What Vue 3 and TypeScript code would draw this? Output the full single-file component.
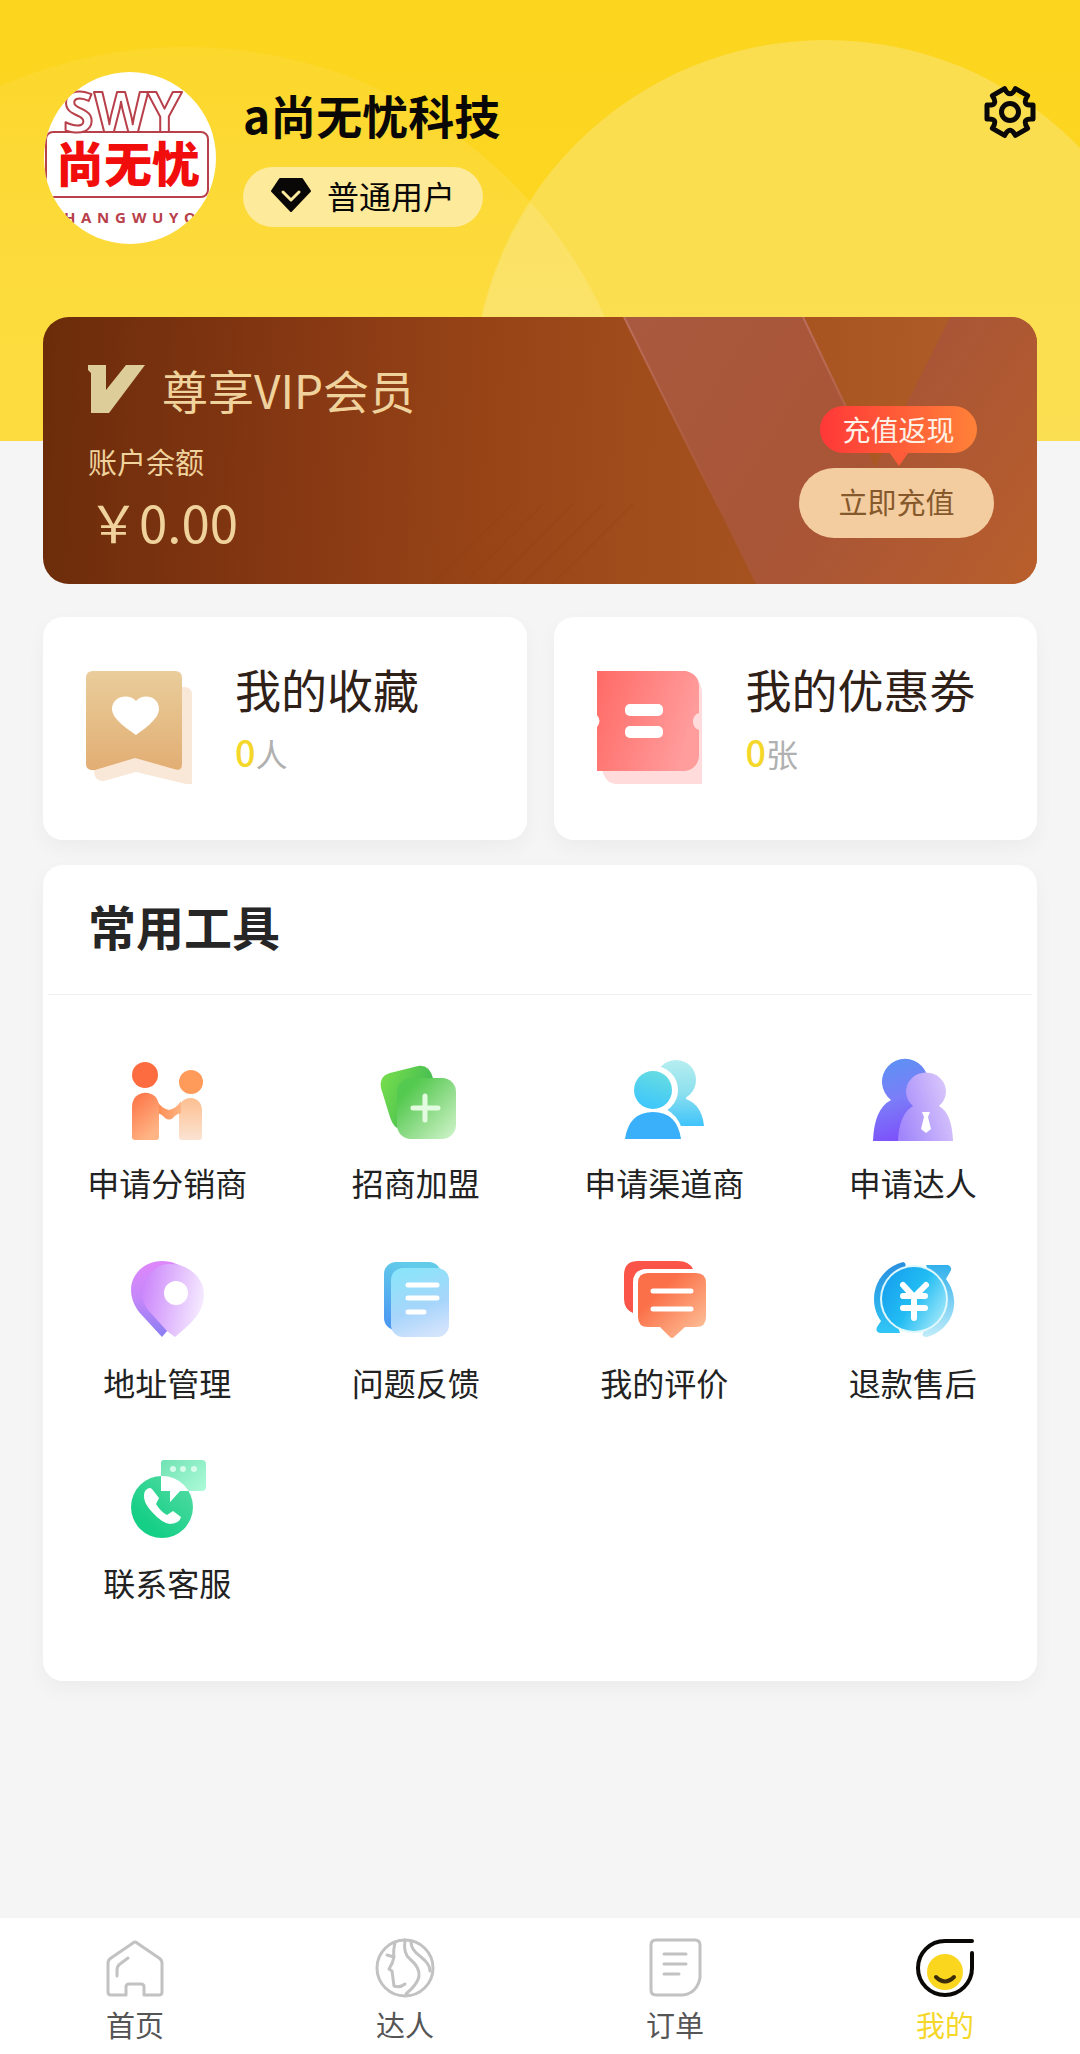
<script setup lang="ts">
import { ref } from 'vue'

interface Tool {
  id: string
  label: string
}

const tools: Tool[] = [
  { id: 'distributor', label: '申请分销商' },
  { id: 'franchise', label: '招商加盟' },
  { id: 'channel', label: '申请渠道商' },
  { id: 'talent', label: '申请达人' },
  { id: 'address', label: '地址管理' },
  { id: 'feedback', label: '问题反馈' },
  { id: 'review', label: '我的评价' },
  { id: 'refund', label: '退款售后' },
  { id: 'service', label: '联系客服' },
]

const tabs: Tool[] = [
  { id: 'home', label: '首页' },
  { id: 'talents', label: '达人' },
  { id: 'orders', label: '订单' },
  { id: 'mine', label: '我的' },
]

const activeTab = ref<string>('mine')
</script>

<template>
  <div class="page">
    <header class="hero">
      <svg class="hero-bg" viewBox="0 0 1080 441" preserveAspectRatio="xMidYMid slice" aria-hidden="true">
        <defs>
          <linearGradient id="heroBase" x1="0" y1="0" x2="0" y2="1">
            <stop offset="0" stop-color="#fcd51e" />
            <stop offset="1" stop-color="#fdd726" />
          </linearGradient>
          <linearGradient id="heroLeft" gradientUnits="userSpaceOnUse" x1="0" y1="47" x2="0" y2="300">
            <stop offset="0" stop-color="#fff" stop-opacity="0.06" />
            <stop offset="1" stop-color="#fff" stop-opacity="0.12" />
          </linearGradient>
          <clipPath id="rightCircle"><circle cx="826" cy="397" r="353" /></clipPath>
        </defs>
        <rect width="1080" height="441" fill="url(#heroBase)" />
        <circle cx="186" cy="507" r="460" fill="url(#heroLeft)" />
        <circle cx="826" cy="393" r="353" fill="#f9e677" fill-opacity="0.55" />
        <circle cx="186" cy="507" r="460" fill="#fff" fill-opacity="0.08" clip-path="url(#rightCircle)" />
      </svg>
      <svg class="avatar" viewBox="0 0 172 172" role="img" aria-label="尚无忧">
        <defs>
          <clipPath id="avatarClip"><circle cx="86" cy="86" r="86" /></clipPath>
        </defs>
        <g clip-path="url(#avatarClip)">
          <rect width="172" height="172" fill="#fff" />
          <rect x="2" y="60" width="162" height="65" rx="7" fill="#fff" stroke="#b8404a" stroke-width="2" />
          <text class="logo-latin" x="19 50 103" y="60" font-size="56">SWY</text>
          <text class="logo-name" x="12" y="110" font-size="48">尚无忧</text>
          <text class="logo-sub" x="3 20 37 53 71 88 108 125 140 158" y="151" font-size="15">SHANGWUYOU</text>
        </g>
      </svg>
      <div class="profile">
        <h1 class="name">a尚无忧科技</h1>
        <div class="level">
          <svg class="diamond" viewBox="0 0 40 34" aria-hidden="true">
            <path d="M9 1h22l8 12-19 20L1 13z" fill="#0a0806" stroke="#0a0806" stroke-width="2" stroke-linejoin="round" />
            <path d="M12 14l8 8 8-8" fill="none" stroke="#fceb9c" stroke-width="3" stroke-linecap="round" stroke-linejoin="round" />
          </svg>
          <span>普通用户</span>
        </div>
      </div>
      <button class="settings" type="button" aria-label="设置">
        <svg viewBox="-26 -26 52 52" fill="none" stroke="#0a0806" stroke-width="5" stroke-linejoin="round">
          <path d="M23-7Q11-6 17.600-16.400L5.400-23.400Q0-13-5.400-23.400L-17.600-16.400Q-11-6-23-7V7Q-11 6-17.600 16.400L-5.400 23.400Q0 13 5.400 23.400L17.600 16.400Q11 6 23 7Z" />
          <circle r="8.500" />
        </svg>
      </button>
    </header>

    <main class="content">
      <section class="vip">
        <svg class="vip-bg" viewBox="0 0 994 267" preserveAspectRatio="none" aria-hidden="true">
          <defs>
            <linearGradient id="vipBase" gradientUnits="userSpaceOnUse" x1="0" y1="100" x2="994" y2="160">
              <stop offset="0" stop-color="#6c2c0a" />
              <stop offset="0.220" stop-color="#833612" />
              <stop offset="0.450" stop-color="#984417" />
              <stop offset="0.600" stop-color="#a04c1b" />
              <stop offset="1" stop-color="#b3602a" />
            </linearGradient>
            <linearGradient id="vipBand" gradientUnits="userSpaceOnUse" x1="581" y1="0" x2="994" y2="267">
              <stop offset="0" stop-color="#a9593f" />
              <stop offset="0.550" stop-color="#a95536" />
              <stop offset="1" stop-color="#b95f2c" />
            </linearGradient>
            <linearGradient id="vipEdge" x1="0" y1="0" x2="0" y2="1">
              <stop offset="0" stop-color="#bd6e5c" />
              <stop offset="1" stop-color="#bd6e5c" stop-opacity="0" />
            </linearGradient>
          </defs>
          <rect width="994" height="267" fill="url(#vipBase)" />
          <path d="M581 0H760L832 150 907 0H994V267H713Z" fill="url(#vipBand)" />
          <path d="M581 0L680 200M760 0L803 90" fill="none" stroke="url(#vipEdge)" stroke-width="2" />
          <path d="M390 267L470 187M420 267L500 187M450 267L530 187M480 267L560 187M510 267L590 187" stroke="#83370f" stroke-width="2" stroke-opacity="0.100" />
        </svg>
        <div class="vip-info">
          <h2 class="vip-title">
            <svg class="vip-mark" viewBox="0 0 57 48" aria-hidden="true">
              <path d="M0 0H18V25L38 0H57L21 48H3V8L0 5Z" fill="#ddcd98" />
            </svg>
            <span>尊享VIP会员</span>
          </h2>
          <p class="balance-label">账户余额</p>
          <p class="balance">￥0.00</p>
        </div>
        <div class="vip-action">
          <div class="promo">充值返现</div>
          <button class="recharge" type="button">立即充值</button>
        </div>
      </section>

      <section class="stats">
        <a class="stat" href="#favorites">
          <svg class="stat-icon" viewBox="0 0 106 113" aria-hidden="true">
            <defs>
              <linearGradient id="favG" x1="0" y1="0" x2="0" y2="1">
                <stop offset="0" stop-color="#e9cd9b" />
                <stop offset="1" stop-color="#e2ae74" />
              </linearGradient>
            </defs>
            <path d="M16 16H98Q106 16 106 24V113H100L50 101 18 110Q10 111 8 102Z" fill="#f9e8d8" />
            <path d="M7 0H89Q96 0 96 7V93Q96 101 88 98L49 87 9 99Q0 100 0 93V7Q0 0 7 0Z" fill="url(#favG)" />
            <path d="M50 64C45 60 26 49 26 38C26 25 43 22 50 30C57 22 73 25 73 38C73 49 55 60 50 64Z" fill="#fff" />
          </svg>
          <span class="stat-text">
            <span class="stat-title">我的收藏</span>
            <span class="stat-value"><b>0</b>人</span>
          </span>
        </a>
        <a class="stat" href="#coupons">
          <svg class="stat-icon" viewBox="0 0 106 113" aria-hidden="true">
            <defs>
              <linearGradient id="couponG" x1="0" y1="0" x2="1" y2="0.300">
                <stop offset="0" stop-color="#ff6a65" />
                <stop offset="1" stop-color="#ff9c9c" />
              </linearGradient>
            </defs>
            <path d="M5 98L96 4Q105 10 105 24V113H20Q8 113 5 98Z" fill="#ffdcdb" />
            <path d="M0 0H89Q102 3 102 16V42A9 9 0 0 0 102 59V85Q101 98 88 100H0V56Q5 50 0 44Z" fill="url(#couponG)" />
            <rect x="28" y="33" width="38" height="12" rx="5" fill="#fff" />
            <rect x="28" y="55" width="38" height="12" rx="5" fill="#fff" />
          </svg>
          <span class="stat-text">
            <span class="stat-title">我的优惠劵</span>
            <span class="stat-value"><b>0</b>张</span>
          </span>
        </a>
      </section>

      <section class="tools">
        <h2 class="tools-title">常用工具</h2>
        <div class="tools-grid">
          <button v-for="tool in tools" :key="tool.id" class="tool" type="button">
            <svg class="tool-icon" viewBox="0 0 88 88" aria-hidden="true">
              <template v-if="tool.id === 'distributor'">
                <defs>
                  <linearGradient id="distA" x1="0" y1="0" x2="0.500" y2="1">
                    <stop offset="0" stop-color="#fc7042" /><stop offset="1" stop-color="#ffb485" />
                  </linearGradient>
                  <linearGradient id="distB" x1="0" y1="0" x2="0" y2="1">
                    <stop offset="0" stop-color="#fdbf90" /><stop offset="1" stop-color="#fbe3d2" />
                  </linearGradient>
                  <linearGradient id="distC" x1="0" y1="0" x2="1" y2="0">
                    <stop offset="0" stop-color="#fd8a50" /><stop offset="1" stop-color="#fdb483" />
                  </linearGradient>
                </defs>
                <circle cx="22" cy="18" r="13" fill="#fc6c40" />
                <circle cx="68" cy="25" r="12" fill="#fe9a5a" />
                <path d="M56 83V53C56 37 79 37 79 53V80Q79 83 76 83H59Q56 83 56 80Z" fill="url(#distB)" />
                <path d="M34 44Q38 51 46 53Q54 51 58 44V56Q53 57 50 61Q46 64 42 61Q39 57 34 56Z" fill="url(#distC)" />
                <path d="M9 80V50C9 31 36 31 36 50V80Q36 83 33 83H12Q9 83 9 80Z" fill="url(#distA)" />
              </template>
              <template v-else-if="tool.id === 'franchise'">
                <defs>
                  <linearGradient id="franA" x1="0" y1="0" x2="1" y2="0.500">
                    <stop offset="0" stop-color="#7be04b" /><stop offset="1" stop-color="#3fb954" />
                  </linearGradient>
                  <linearGradient id="franB" x1="0" y1="0" x2="1" y2="1">
                    <stop offset="0.200" stop-color="#55ca50" /><stop offset="0.600" stop-color="#96de90" /><stop offset="1" stop-color="#d2f5cc" />
                  </linearGradient>
                </defs>
                <path d="M18 16L46 9Q57 7 61 21L62 40 25 71Q20 68 17 57L9 31Q7 19 18 16Z" fill="url(#franA)" />
                <rect x="25" y="21" width="59" height="61" rx="14" fill="url(#franB)" />
                <path d="M53 39V63M41 51H66" stroke="#e3fbe0" stroke-width="5" stroke-linecap="round" />
              </template>
              <template v-else-if="tool.id === 'channel'">
                <defs>
                  <linearGradient id="chanA" gradientUnits="userSpaceOnUse" x1="0" y1="3" x2="0" y2="69">
                    <stop offset="0" stop-color="#b6eef0" /><stop offset="0.500" stop-color="#8ce0ee" /><stop offset="1" stop-color="#3fc3fa" />
                  </linearGradient>
                  <linearGradient id="chanB" x1="0.300" y1="0" x2="0" y2="1">
                    <stop offset="0" stop-color="#63dae4" /><stop offset="1" stop-color="#38c4ff" />
                  </linearGradient>
                </defs>
                <g fill="url(#chanA)">
                  <circle cx="56" cy="23" r="20" />
                  <path d="M50 36H66V42Q82 48 84 69H45Z" />
                </g>
                <circle cx="34" cy="33" r="24" fill="#fff" />
                <path d="M0 88Q4 49 34 49Q61 51 66 88Z" fill="#fff" />
                <circle cx="33" cy="33" r="19" fill="url(#chanB)" />
                <path d="M5 82Q9 55 33 55Q57 55 61 82Z" fill="#3ab0fa" />
              </template>
              <template v-else-if="tool.id === 'talent'">
                <defs>
                  <linearGradient id="talA" x1="0.200" y1="0" x2="0.400" y2="1">
                    <stop offset="0" stop-color="#5b92f3" /><stop offset="0.500" stop-color="#7b7ef8" /><stop offset="1" stop-color="#7d51fb" />
                  </linearGradient>
                  <linearGradient id="talB" x1="0" y1="0.800" x2="1" y2="0.400">
                    <stop offset="0" stop-color="#a085fb" /><stop offset="1" stop-color="#dac8fb" />
                  </linearGradient>
                </defs>
                <path d="M22 43A23 23 0 1 1 50 43L60 84H4Q5 52 22 43Z" fill="url(#talA)" />
                <path d="M44 49A20 19 0 1 1 70 49Q83 56 84 84H29Q30 57 44 49Z" fill="url(#talB)" />
                <path d="M53 55H61L59 60 62 72 57 76 52 72 55 60Z" fill="#fff" />
              </template>
              <template v-else-if="tool.id === 'address'">
                <defs>
                  <linearGradient id="addrA" x1="0.300" y1="0" x2="0.300" y2="1">
                    <stop offset="0" stop-color="#df87fb" /><stop offset="0.500" stop-color="#c487f9" /><stop offset="1" stop-color="#8a7df3" />
                  </linearGradient>
                  <linearGradient id="addrB" x1="0" y1="0.400" x2="1" y2="0.600">
                    <stop offset="0" stop-color="#cc87fb" /><stop offset="1" stop-color="#f6edff" />
                  </linearGradient>
                </defs>
                <path d="M39 80L16 55C-3 29 15 4 39 4C50 4 56 8 66 13L45 73Z" fill="url(#addrA)" />
                <path d="M39 8C60 3 81 18 81 37C81 57 66 68 52 80L44 74 25 53C14 38 18 18 39 8Z" fill="url(#addrB)" />
                <circle cx="53" cy="36" r="12" fill="#fff" />
              </template>
              <template v-else-if="tool.id === 'feedback'">
                <defs>
                  <linearGradient id="feedA" x1="0.300" y1="0" x2="0" y2="1">
                    <stop offset="0" stop-color="#62cbea" /><stop offset="1" stop-color="#4a94f3" />
                  </linearGradient>
                  <linearGradient id="feedB" x1="0.300" y1="0" x2="0.600" y2="1">
                    <stop offset="0" stop-color="#8ae4fa" /><stop offset="0.600" stop-color="#a8d5fb" /><stop offset="1" stop-color="#d2e3fc" />
                  </linearGradient>
                </defs>
                <rect x="12" y="5" width="57" height="68" rx="12" fill="url(#feedA)" />
                <rect x="19" y="11" width="58" height="69" rx="12" fill="url(#feedB)" />
                <path d="M36 28H65M36 41H65M36 55H52" stroke="#fff" stroke-width="5" stroke-linecap="round" />
              </template>
              <template v-else-if="tool.id === 'review'">
                <defs>
                  <linearGradient id="revA" x1="0" y1="0" x2="1" y2="1">
                    <stop offset="0.300" stop-color="#fb7048" /><stop offset="1" stop-color="#fdc8a0" />
                  </linearGradient>
                </defs>
                <path d="M18 4H58Q69 4 73 12H24Q13 14 13 25V56Q4 52 4 42V18Q4 4 18 4Z" fill="#fb5448" />
                <path d="M28 16H76Q86 16 86 26V60Q86 70 76 70H65L54 80Q52 82 50 80L40 70H28Q18 70 18 60V26Q18 16 28 16Z" fill="url(#revA)" />
                <path d="M33 34H71M33 52H71" stroke="#fff" stroke-width="5" stroke-linecap="round" />
              </template>
              <template v-else-if="tool.id === 'refund'">
                <defs>
                  <linearGradient id="refA" x1="0" y1="0.200" x2="1" y2="0.800">
                    <stop offset="0" stop-color="#179fee" /><stop offset="0.500" stop-color="#22bdf3" /><stop offset="1" stop-color="#a6e9fa" />
                  </linearGradient>
                  <linearGradient id="refB" x1="0" y1="0" x2="0" y2="1">
                    <stop offset="0" stop-color="#2a8fdf" /><stop offset="1" stop-color="#30c6f6" />
                  </linearGradient>
                  <linearGradient id="refC" x1="0" y1="0" x2="0" y2="1">
                    <stop offset="0" stop-color="#31b0ec" /><stop offset="1" stop-color="#c0ecfa" />
                  </linearGradient>
                </defs>
                <path d="M34 5Q38 6 36 10L18 35 31 76H11Q6 75 8 70L12 64C-3 43 7 12 34 5Z" fill="url(#refB)" />
                <path d="M57 8H79Q84 10 81 15L77 22C94 45 83 73 58 80Q52 80 54 76L72 46Z" fill="url(#refC)" />
                <circle cx="45" cy="42" r="34" fill="#dff8fd" />
                <circle cx="45" cy="42" r="32" fill="url(#refA)" />
                <path d="M34 28L45 40 57 28M34 39H56M34 51H56M45 40V61" fill="none" stroke="#fff" stroke-width="6" stroke-linecap="round" stroke-linejoin="round" />
              </template>
              <template v-else>
                <defs>
                  <linearGradient id="srvA" x1="1" y1="0" x2="0.300" y2="0.800">
                    <stop offset="0" stop-color="#59dda6" /><stop offset="1" stop-color="#16cf86" />
                  </linearGradient>
                  <linearGradient id="srvB" x1="0" y1="0" x2="1" y2="1">
                    <stop offset="0" stop-color="#6fe2b2" /><stop offset="1" stop-color="#b8ffe0" />
                  </linearGradient>
                  <clipPath id="srvClip"><path d="M38 3H83V34H57L47 45V34H38Z" /></clipPath>
                </defs>
                <circle cx="39" cy="50" r="31" fill="url(#srvA)" />
                <path d="M41 3H79Q83 3 83 7V30Q83 34 79 34H57L47 45V34H38V6Q38 3 41 3Z" fill="url(#srvB)" />
                <circle cx="39" cy="50" r="31" fill="#fff" clip-path="url(#srvClip)" />
                <path d="M22 34Q26 29 29 32L36 41 33 47Q38 55 44 58L50 54 58 60Q57 66 47 67Q39 66 30 56Q18 44 22 34Z" fill="#fff" />
                <g fill="#d5fbea"><circle cx="50" cy="12" r="3" /><circle cx="60" cy="12" r="3" /><circle cx="71" cy="12" r="3" /></g>
              </template>
            </svg>
            <span>{{ tool.label }}</span>
          </button>
        </div>
      </section>
    </main>

    <nav class="tabbar">
      <button
        v-for="tab in tabs"
        :key="tab.id"
        class="tab"
        :class="{ active: tab.id === activeTab }"
        type="button"
        @click="activeTab = tab.id"
      >
        <svg class="tab-icon" viewBox="0 0 60 60" fill="none" stroke="#c2c2c2" stroke-width="3" stroke-linecap="round" stroke-linejoin="round" aria-hidden="true">
          <template v-if="tab.id === 'home'">
            <path d="M28 5Q30 3 32 5L54 20Q57 22 57 25V54Q57 57 54 57H39V49Q39 46 36 46H24Q21 46 21 49V57H6Q3 57 3 54V25Q3 22 6 20Z" />
            <path d="M23 20L15 26Q12 28 12 32V38" />
          </template>
          <template v-else-if="tab.id === 'talents'">
            <circle cx="30" cy="30" r="28" />
            <path d="M30 2Q28 16 35 21C50 34 45 44 31 56M36 4Q36 12 46 19Q55 26 55 33" />
            <path d="M20 5Q18 13 19 19Q18 25 14 31L17 33 19 48Q25 50 30 46M12 17L19 19" />
          </template>
          <template v-else-if="tab.id === 'orders'">
            <path d="M11 2H50Q55 2 55 7V40Q52 55 38 57H11Q6 57 6 52V7Q6 2 11 2Z" />
            <path d="M19 16H41M19 26H41M19 36H34" />
          </template>
          <template v-else>
            <circle cx="30" cy="34" r="18" fill="#fbd61f" stroke="none" />
            <path d="M57 3H30A27 27 0 1 0 57 30V15" stroke="#0a0806" stroke-width="4" />
            <path d="M21 39Q30 48 39 39" stroke="#3a2c08" stroke-width="4" />
          </template>
        </svg>
        <span>{{ tab.label }}</span>
      </button>
    </nav>
  </div>
</template>

<style>
body {
  margin: 0;
  background: #f5f5f5;
}
</style>

<style scoped>
.page {
  display: flex;
  flex-direction: column;
  min-height: 100vh;
  background: #f5f5f5;
  color: #222;
  font-family: "Noto Sans CJK SC", sans-serif;
}

h1,
h2,
p {
  margin: 0;
}

button {
  margin: 0;
  padding: 0;
  border: 0;
  background: none;
  color: inherit;
  font: inherit;
  cursor: pointer;
}

svg {
  display: block;
}

.hero {
  position: relative;
  display: flex;
  align-items: flex-start;
  padding: 72px 44px 197px;
  background: #fcd51e;
}

.hero-bg {
  position: absolute;
  inset: 0;
  width: 100%;
  height: 100%;
}

.avatar {
  position: relative;
  flex: none;
  width: 172px;
  height: 172px;
}

.logo-latin {
  fill: #fff;
  stroke: #b8404a;
  stroke-width: 2;
  stroke-linejoin: round;
  font-family: "Noto Sans", sans-serif;
  font-weight: 700;
}

.logo-name {
  fill: #f20d0d;
  font-weight: 900;
}

.logo-sub {
  fill: #b8404a;
  font-family: "Noto Sans", sans-serif;
  font-weight: 700;
}

.profile {
  position: relative;
  flex: 1;
  display: flex;
  flex-direction: column;
  align-items: flex-start;
  gap: 23px;
  margin: 12px 0 0 27px;
}

.name {
  color: #0a0806;
  font-size: 46px;
  font-weight: 700;
  line-height: 60px;
}

.level {
  display: flex;
  align-items: center;
  gap: 16px;
  padding: 0 28px;
  border-radius: 30px;
  background: #fdea9a;
  color: #0a0806;
  font-size: 32px;
  line-height: 56px;
  padding-bottom: 4px;
}

.diamond {
  width: 40px;
  height: 34px;
}

.settings {
  position: relative;
  flex: none;
  width: 52px;
  height: 52px;
  margin-top: 14px;
}

.content {
  position: relative;
  flex: 1;
  margin-top: -124px;
  padding: 0 43px 40px;
}

.vip {
  position: relative;
  display: flex;
  justify-content: space-between;
  padding: 43px 43px 33px 45px;
  border-radius: 26px;
  overflow: hidden;
  color: #efd29c;
}

.vip-bg {
  position: absolute;
  inset: 0;
  width: 100%;
  height: 100%;
}

.vip-info,
.vip-action {
  position: relative;
}

.vip-title {
  display: flex;
  align-items: center;
  gap: 17px;
  font-size: 46px;
  font-weight: 400;
  line-height: 58px;
}

.vip-mark {
  width: 57px;
  height: 48px;
}

.balance-label {
  margin-top: 23px;
  font-size: 29px;
  line-height: 40px;
}

.balance {
  margin-top: 10px;
  font-size: 51px;
  line-height: 60px;
}

.vip-action {
  display: flex;
  flex-direction: column;
  align-items: flex-end;
  gap: 15px;
  padding-top: 46px;
}

.promo {
  position: relative;
  width: 157px;
  margin-right: 17px;
  border-radius: 24px;
  background: linear-gradient(90deg, #ff3838, #ff8138);
  color: #fff0e6;
  font-size: 28px;
  line-height: 47px;
  text-align: center;
}

.promo::after {
  content: "";
  position: absolute;
  top: 46px;
  left: 50%;
  margin-left: -10px;
  border: 10px solid transparent;
  border-top: 14px solid #fd5b39;
  border-bottom: 0;
}

.recharge {
  width: 195px;
  height: 70px;
  padding-bottom: 4px;
  border-radius: 35px;
  background: #f3cca0;
  color: #86592c;
  font-size: 29px;
}

.stats {
  display: flex;
  gap: 27px;
  margin-top: 33px;
}

.stat {
  flex: 1;
  display: flex;
  align-items: flex-start;
  gap: 43px;
  padding: 41px 43px 56px;
  border-radius: 20px;
  background: #fff;
  box-shadow: 0 8px 20px rgba(0, 0, 0, 0.04);
  text-decoration: none;
}

.stat-icon {
  flex: none;
  width: 106px;
  height: 113px;
  margin-top: 13px;
}

.stat-text {
  display: flex;
  flex-direction: column;
  gap: 11px;
}

.stat-title {
  color: #2f2118;
  font-size: 46px;
  line-height: 60px;
  white-space: nowrap;
}

.stat-value {
  color: #b0b0b0;
  font-size: 32px;
  line-height: 44px;
}

.stat-value b {
  color: #f5d72a;
  font-size: 36px;
  font-weight: 500;
}

.tools {
  margin-top: 25px;
  border-radius: 20px;
  background: #fff;
  box-shadow: 0 8px 20px rgba(0, 0, 0, 0.04);
}

.tools-title {
  margin: 0 5px;
  padding: 24px 40px 33px;
  border-bottom: 1px solid #f0f0f0;
  color: #262626;
  font-size: 48px;
  font-weight: 700;
  line-height: 72px;
}

.tools-grid {
  display: grid;
  grid-template-columns: repeat(4, 1fr);
  row-gap: 51px;
  padding: 62px 0 75px;
}

.tool {
  display: flex;
  flex-direction: column;
  align-items: center;
  gap: 13px;
  color: #222;
  font-size: 32px;
  line-height: 48px;
}

.tool-icon {
  width: 88px;
  height: 88px;
}

.tabbar {
  position: sticky;
  bottom: 0;
  display: flex;
  padding: 20px 0 8px;
  background: #fff;
}

.tab {
  flex: 1;
  display: flex;
  flex-direction: column;
  align-items: center;
  gap: 4px;
  color: #555;
  font-size: 29px;
  line-height: 44px;
}

.tab.active {
  color: #f5d72a;
}

.tab-icon {
  width: 60px;
  height: 60px;
}
</style>
